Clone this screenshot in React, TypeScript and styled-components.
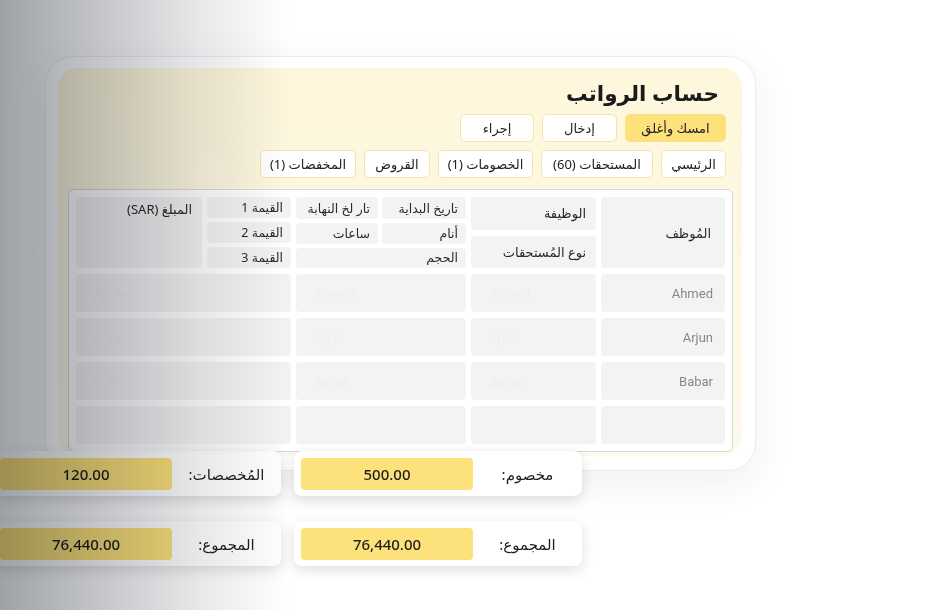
import styled, { createGlobalStyle } from "styled-components";

const GlobalStyle = createGlobalStyle`
  html, body {
    margin: 0;
    padding: 0;
    background: #ffffff;
  }
  body {
    font-family: "Noto Sans", "DejaVu Sans", sans-serif;
    color: #1f1f1f;
  }
`;

const rows = [
  { name: "Ahmed", ghost: "Ahmed" },
  { name: "Arjun", ghost: "Arjun" },
  { name: "Babar", ghost: "Babar" },
  { name: "", ghost: "" },
];

const App = () => {
  return (
    <>
      <GlobalStyle />
      <Page>
        <Stage>
          <Frame>
            <Panel dir="rtl">
              <Title>حساب الرواتب</Title>
              <ButtonRow>
                <Button $primary $w={101}>امسك وأغلق</Button>
                <Button $w={75}>إدخال</Button>
                <Button $w={74}>إجراء</Button>
              </ButtonRow>
              <ButtonRow>
                <Button $w={65}>الرئيسي</Button>
                <Button $w={112}>المستحقات (60)</Button>
                <Button $w={95}>الخصومات (1)</Button>
                <Button $w={66}>القروض</Button>
                <Button $w={96}>المخفضات (1)</Button>
              </ButtonRow>
              <Table>
                <HeadCell $center>المُوظف</HeadCell>
                <Stack $gap={6}>
                  <HeadCell $grow>الوظيفة</HeadCell>
                  <HeadCell $grow>نوع المُستحقات</HeadCell>
                </Stack>
                <DateGrid>
                  <SmallCell>تاريخ البداية</SmallCell>
                  <SmallCell>تار لخ النهابة</SmallCell>
                  <SmallCell>أنام</SmallCell>
                  <SmallCell>ساعات</SmallCell>
                  <SmallCell $wide>الحجم</SmallCell>
                </DateGrid>
                <Stack $gap={4}>
                  <SmallCell $grow>القيمة 1</SmallCell>
                  <SmallCell $grow>القيمة 2</SmallCell>
                  <SmallCell $grow>القيمة 3</SmallCell>
                </Stack>
                <HeadCell $top>المبلغ (SAR)</HeadCell>

                {rows.map((r, i) => (
                  <Row key={i}>
                    <NameCell>{r.name}</NameCell>
                    <BodyCell><Ghost>{r.ghost}</Ghost></BodyCell>
                    <BodyCell><Ghost>{r.ghost}</Ghost></BodyCell>
                    <BodyCell $span={2}><Ghost>{r.ghost}</Ghost></BodyCell>
                  </Row>
                ))}
              </Table>
            </Panel>
          </Frame>
          <Summary dir="rtl">
            <SumCard>
              <SumLabel>مخصوم:</SumLabel>
              <SumValue>500.00</SumValue>
            </SumCard>
            <SumCard>
              <SumLabel>المُخصصات:</SumLabel>
              <SumValue>120.00</SumValue>
            </SumCard>
            <SumCard>
              <SumLabel>المجموع:</SumLabel>
              <SumValue>76,440.00</SumValue>
            </SumCard>
            <SumCard>
              <SumLabel>المجموع:</SumLabel>
              <SumValue>76,440.00</SumValue>
            </SumCard>
          </Summary>
        </Stage>
        <Fade />
      </Page>
    </>
  );
};

export default App;

const Page = styled.div`
  position: relative;
  width: 933px;
  height: 610px;
  overflow: hidden;
  background: #ffffff;
`;

const Stage = styled.div`
  padding-top: 56px;
  display: flex;
  flex-direction: column;
  align-items: flex-start;
`;

const Frame = styled.div`
  margin-left: 45px;
  width: 711px;
  box-sizing: border-box;
  padding: 11px 13px 14px 12px;
  background: rgba(255, 255, 255, 0.95);
  border: 1px solid #ececf0;
  border-radius: 28px;
  box-shadow: 0 12px 40px rgba(40, 40, 60, 0.07);
`;

const Panel = styled.div`
  background: linear-gradient(180deg, #fef7dc 0%, #fdf8e4 55%, #fdf9ec 100%);
  border-radius: 20px;
  padding: 9px 9px 4px 10px;
  display: flex;
  flex-direction: column;
`;

const Title = styled.h1`
  margin: 0 14px 0 0;
  font-size: 21.5px;
  line-height: 32px;
  font-weight: 700;
  color: #1b1b1b;
`;

const ButtonRow = styled.div`
  display: flex;
  gap: 8px;
  padding-right: 7px;
  margin-top: 5px;
  & + & {
    margin-top: 8px;
  }
`;

const Button = styled.div<{ $primary?: boolean; $w: number }>`
  width: ${(p) => p.$w}px;
  height: 28px;
  box-sizing: border-box;
  display: flex;
  align-items: center;
  justify-content: center;
  white-space: nowrap;
  font-size: 13px;
  color: #222;
  background: ${(p) => (p.$primary ? "#fde27c" : "#ffffff")};
  border: 1px solid ${(p) => (p.$primary ? "#fde27c" : "#f6e4a4")};
  border-radius: 5px;
`;

const Table = styled.div`
  margin-top: 11px;
  background: #ffffff;
  border: 1px solid #d9d9db;
  border-radius: 6px;
  padding: 7px;
  display: grid;
  grid-template-columns: 124px 125px 170px 84px 1fr;
  column-gap: 5px;
  row-gap: 6px;
  grid-template-rows: 71px repeat(4, 38px);
`;

const Cell = styled.div`
  background: #f3f3f3;
  border-radius: 4px;
  font-size: 13px;
  color: #2a2a2a;
  box-sizing: border-box;
  padding: 0 10px;
  display: flex;
  white-space: nowrap;
`;

const HeadCell = styled(Cell)<{ $center?: boolean; $top?: boolean; $grow?: boolean }>`
  align-items: ${(p) => (p.$top ? "flex-start" : "center")};
  padding-top: ${(p) => (p.$top ? "3px" : "0")};
  flex: ${(p) => (p.$grow ? 1 : "none")};
  padding-right: ${(p) => (p.$center ? "14px" : "10px")};
`;

const Stack = styled.div<{ $gap: number }>`
  display: flex;
  flex-direction: column;
  gap: ${(p) => p.$gap}px;
`;

const DateGrid = styled.div`
  display: grid;
  grid-template-columns: 84px 1fr;
  grid-template-rows: 22px 1fr 1fr;
  gap: 4px;
`;

const SmallCell = styled(Cell)<{ $wide?: boolean; $grow?: boolean }>`
  align-items: center;
  font-size: 12.5px;
  padding: 0 8px;
  grid-column: ${(p) => (p.$wide ? "span 2" : "auto")};
  flex: ${(p) => (p.$grow ? 1 : "none")};
`;

const Row = styled.div`
  display: contents;
`;

const BodyCell = styled(Cell)<{ $span?: number }>`
  grid-column: span ${(p) => p.$span ?? 1};
  align-items: center;
  justify-content: flex-end;
  padding: 0 18px;
`;

const NameCell = styled(Cell)`
  align-items: center;
  padding-right: 12px;
  font-family: Roboto, "Noto Sans", sans-serif;
  font-size: 13px;
  color: #888888;
`;

const Ghost = styled.span`
  font-family: Roboto, "Noto Sans", sans-serif;
  font-size: 13px;
  color: #eeeeee;
`;

const Summary = styled.div`
  margin-top: -20px;
  margin-left: -7px;
  display: grid;
  grid-template-columns: 288px 288px;
  column-gap: 13px;
  row-gap: 25px;
`;

const SumCard = styled.div`
  height: 45px;
  box-sizing: border-box;
  padding: 7px 0 6px 7px;
  background: #ffffff;
  border-radius: 8px;
  box-shadow: 0 4px 14px rgba(0, 0, 0, 0.13);
  display: flex;
  align-items: stretch;
`;

const SumLabel = styled.div`
  flex: 1;
  display: flex;
  align-items: center;
  justify-content: center;
  font-size: 15px;
  color: #1f1f1f;
`;

const SumValue = styled.div`
  width: 172px;
  background: #fde27c;
  border-radius: 4px;
  display: flex;
  align-items: center;
  justify-content: center;
  font-size: 15px;
  font-weight: 500;
  color: #1f1f1f;
`;

const Fade = styled.div`
  position: absolute;
  inset: 0;
  pointer-events: none;
  mix-blend-mode: multiply;
  background: linear-gradient(
    90deg,
    #9ea1a6 0px,
    #c4c6c9 100px,
    #e8e8ea 200px,
    #ffffff 290px
  );
`;
